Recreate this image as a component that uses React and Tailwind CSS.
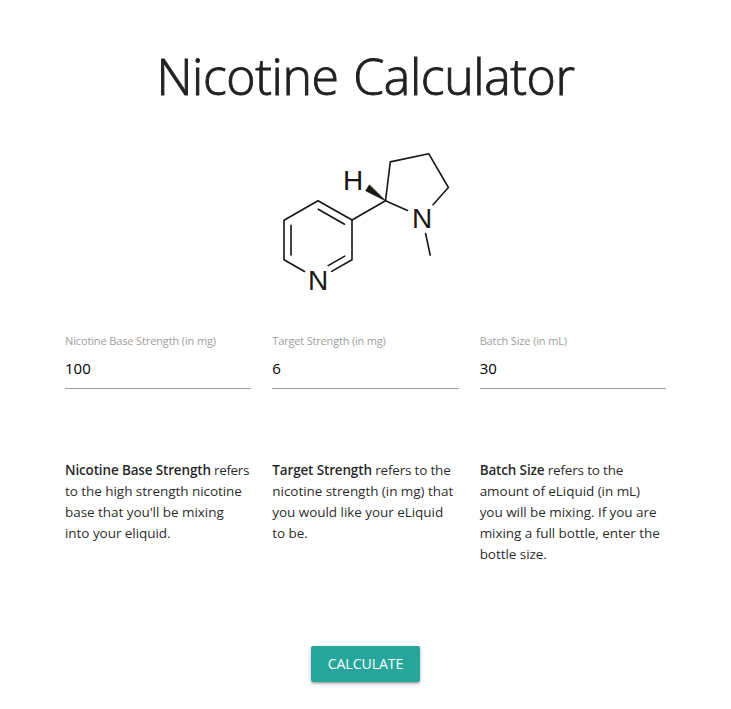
const fields = [
  {
    label: 'Nicotine Base Strength (in mg)',
    value: '100',
    labelTracking: 'tracking-[-0.13px]',
    lines: ['to the high strength nicotine', "base that you'll be mixing", 'into your eliquid.'],
    term: 'Nicotine Base Strength',
    rest: ' refers',
    restTracking: 'tracking-[-0.35px]',
  },
  {
    label: 'Target Strength (in mg)',
    value: '6',
    labelTracking: 'tracking-[-0.18px]',
    lines: ['nicotine strength (in mg) that', 'you would like your eLiquid', 'to be.'],
    term: 'Target Strength',
    rest: ' refers to the',
    restTracking: 'tracking-[-0.18px]',
  },
  {
    label: 'Batch Size (in mL)',
    value: '30',
    labelTracking: 'tracking-[-0.14px]',
    lines: ['amount of eLiquid (in mL)', 'you will be mixing. If you are', 'mixing a full bottle, enter the', 'bottle size.'],
    term: 'Batch Size',
    rest: ' refers to the',
    restTracking: 'tracking-[-0.18px]',
  },
];

function Molecule() {
  return (
    <svg
      className="block h-[165px] w-[191px]"
      viewBox="270 140 191 165"
      fill="none"
      stroke="#161613"
      strokeWidth="1.6"
      strokeLinecap="round"
      strokeLinejoin="round"
    >
      <path d="M304.5 271.5 284 259.7V220.3L318 200.8 352 220V259.7L331.7 271.4" />
      <path d="M318.3 209.2 344.5 224.2M291 225.3V255M328.2 265.6 344.7 256.1" />
      <path d="M352 220 385.5 200.8 390.3 161.9 428.7 153.7 448.4 187.5 433 204.7M385.5 200.8 407.5 210.5M425.6 233.5 430.2 255" />
      <path d="M369.3 185.1 365.6 190.8 385.5 200.8Z" fill="#161613" strokeWidth="0.7" />
      <g fill="#161613" stroke="none" fontFamily="Liberation Sans, Arial, sans-serif" fontSize="28" textAnchor="middle">
        <text x="353.2" y="190.3">H</text>
        <text x="422.2" y="227.8">N</text>
        <text x="318" y="289.9">N</text>
      </g>
    </svg>
  );
}

export default function App() {
  return (
    <main className="flex h-[709px] w-[731px] flex-col items-center overflow-hidden bg-white font-['Open_Sans','Noto_Sans',sans-serif] text-black/87">
      <h1 className="mt-[48px] h-[56px] whitespace-nowrap text-[50px] font-light leading-[56px] tracking-[-0.4px] text-[#212121] [-webkit-text-stroke:0.9px_#212121] [word-spacing:2px]">
        Nicotine Calculator
      </h1>
      <div className="mt-[36px]">
        <Molecule />
      </div>
      <form className="mt-[28px] flex flex-col items-center">
        <div className="grid w-[601px] grid-cols-3 gap-x-[21px]">
          {fields.map((f) => (
            <label key={f.term} className="block">
              <span className={`block whitespace-nowrap text-[11px] leading-4 text-[#9e9e9e] ${f.labelTracking}`}>{f.label}</span>
              <input
                className="block h-10 w-full border-b border-[#9e9e9e] bg-transparent pb-px text-[15px] text-black outline-none"
                defaultValue={f.value}
              />
            </label>
          ))}
        </div>
        <div className="mt-[71px] grid h-[105px] w-[601px] grid-cols-3 gap-x-[21px] text-[13.5px] leading-[21px] tracking-[-0.05px]">
          {fields.map((f) => (
            <p key={f.term} className="whitespace-nowrap">
              <strong className="font-semibold tracking-[-0.15px]">{f.term}</strong>
              <span className={f.restTracking}>{f.rest}</span>
              {f.lines.map((line) => (
                <span key={line} className="block">{line}</span>
              ))}
            </p>
          ))}
        </div>
        <button
          type="button"
          className="mt-[81px] h-9 w-[109px] rounded-[2px] bg-[#26a69a] text-center text-[14px] leading-9 text-white shadow-[0_2px_2px_0_rgba(0,0,0,0.14),0_3px_1px_-2px_rgba(0,0,0,0.12),0_1px_5px_0_rgba(0,0,0,0.2)]"
        >
          CALCULATE
        </button>
      </form>
    </main>
  );
}
